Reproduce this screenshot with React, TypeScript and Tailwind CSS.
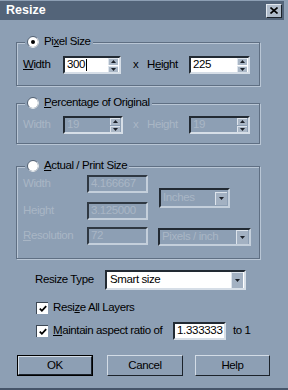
import React from 'react';

const BG = 'bg-[#8d9fb4]';

function Radio({ checked }: { checked?: boolean }) {
  return (
    <svg width="12" height="12" viewBox="0 0 12 12" className="shrink-0">
      <circle cx="6" cy="6" r="5.5" fill="#ffffff" stroke="#4f5e70" />
      <path d="M9.9 2.1 A5.5 5.5 0 0 1 2.1 9.9" fill="none" stroke="#e6ecf2" />
      {checked && <circle cx="6" cy="6" r="2" fill="#000" />}
    </svg>
  );
}

function Check() {
  return (
    <div className="w-[12px] h-[12px] shrink-0 bg-white border-t border-l border-[#3c4754] border-b-[#dfe6ee] border-r-[#dfe6ee] flex items-center justify-center">
      <svg width="10" height="10" viewBox="0 0 10 10">
        <path d="M1.8 4.6 L3.9 6.8 L8.2 2.2" fill="none" stroke="#000" strokeWidth="1.8" />
      </svg>
    </div>
  );
}

function Spin() {
  return (
    <div className="flex flex-col gap-px w-[10px] h-[14px]">
      {[0, 1].map((i) => (
        <div
          key={i}
          className="flex-1 bg-[#aab7c6] border-t border-l border-[#dde4ec] border-b-[#4e5c6d] border-r-[#4e5c6d] flex items-center justify-center"
        >
          <svg width="5" height="3" viewBox="0 0 5 3">
            <path d={i === 0 ? 'M0 3 L2.5 0 L5 3 Z' : 'M0 0 L2.5 3 L5 0 Z'} fill="#1b2028" />
          </svg>
        </div>
      ))}
    </div>
  );
}

function ArrowBtn({ h }: { h: string }) {
  return (
    <div
      className={`w-[12px] ${h} bg-[#a3b1c2] border-t border-l border-[#dde4ec] border-b-[#4e5c6d] border-r-[#4e5c6d] flex items-center justify-center`}
    >
      <svg width="5" height="3" viewBox="0 0 5 3">
        <path d="M0 0 L2.5 3 L5 0 Z" fill="#1b2028" />
      </svg>
    </div>
  );
}

function SpinBox({ value, w, disabled, caret }: { value: string; w: string; disabled?: boolean; caret?: boolean }) {
  return (
    <div
      className={`${w} h-[18px] border-2 border-t-[#222a33] border-l-[#222a33] border-b-[#d6dee7] border-r-[#d6dee7] flex items-center justify-between pl-[2px] pr-px ${
        disabled ? `${BG} text-[#a9b6c5]` : 'bg-white text-black'
      }`}
    >
      <span className="flex items-center leading-none">
        {value}
        {caret && <span className="w-px h-[12px] bg-black ml-px" />}
      </span>
      <Spin />
    </div>
  );
}

function Field({ value, w }: { value: string; w: string }) {
  return (
    <div className={`${w} h-[18px] border-2 border-t-[#2f3842] border-l-[#2f3842] border-b-[#c4cfdb] border-r-[#c4cfdb] ${BG} text-[#a9b6c5] flex items-center pl-[2px] leading-none`}>
      {value}
    </div>
  );
}

function Select({ value, w, h, btn }: { value: string; w: string; h: string; btn: string }) {
  return (
    <div
      className={`${w} ${h} border-2 border-t-[#222a33] border-l-[#222a33] border-b-[#c4cfdb] border-r-[#c4cfdb] ${BG} text-[#a9b6c5] flex items-center justify-between pl-[2px] pr-px leading-none`}
    >
      <span>{value}</span>
      <ArrowBtn h={btn} />
    </div>
  );
}

function Group({ title, checked, disabled, className, children }: { title: React.ReactNode; checked?: boolean; disabled?: boolean; className: string; children: React.ReactNode }) {
  return (
    <div className={`w-[244px] border border-[#5f6f83] shadow-[inset_1px_1px_0_#b9c6d5,1px_1px_0_#b9c6d5] ${className}`}>
      <div className={`-mt-[8px] ml-[8px] w-fit h-[14px] px-[2px] ${BG} flex items-center gap-[5px] text-black`}>
        <Radio checked={checked} />
        <span>{title}</span>
      </div>
      <div className={disabled ? 'text-[#a9b6c5]' : 'text-black'}>{children}</div>
    </div>
  );
}

function Button({ label, w, def, className }: { label: string; w: string; def?: boolean; className?: string }) {
  return (
    <div className={`${w} h-[21px] ${def ? 'border border-black' : ''} ${className ?? ''}`}>
      <div className="w-full h-full border border-t-[#d3dce6] border-l-[#d3dce6] border-b-[#1c232b] border-r-[#1c232b] flex items-center justify-center text-black">
        {label}
      </div>
    </div>
  );
}

export default function App() {
  return (
    <div
      className={`w-[288px] h-[390px] ${BG} flex flex-col pt-px pr-[4px] border-b-2 border-[#46556a] text-[11.5px] tracking-[-0.4px] font-['Liberation_Sans',Arial,sans-serif] overflow-hidden`}
    >
      {/* Title bar */}
      <div className="h-[19px] bg-[#536479] flex items-center justify-between pl-[6px] pr-[2px]">
        <span className="text-white font-bold text-[12.5px] tracking-[0px]">Resize</span>
        <div className="w-[16px] h-[14px] bg-[#b0bccb] border border-t-[#e3e9f0] border-l-[#e3e9f0] border-b-[#1c232b] border-r-[#1c232b] flex items-center justify-center">
          <svg width="8" height="7" viewBox="0 0 8 7">
            <path d="M0.5 0.5 L7.5 6.5 M7.5 0.5 L0.5 6.5" stroke="#000" strokeWidth="1.6" />
          </svg>
        </div>
      </div>

      <div className="flex flex-col pl-[16px]">
        {/* Pixel Size */}
        <Group title={<>Pi<u>x</u>el Size</>} checked className="mt-[22px] pb-[11px]">
          <div className="flex items-center mt-[7px] pl-[6px]">
            <span className="w-[40px]"><u>W</u>idth</span>
            <SpinBox value="300" w="w-[58px]" caret />
            <span className="ml-[12px] w-[14px]">x</span>
            <span className="w-[42px]">H<u>e</u>ight</span>
            <SpinBox value="225" w="w-[61px]" />
          </div>
        </Group>

        {/* Percentage */}
        <Group title={<><u>P</u>ercentage of Original</>} disabled className="mt-[17px] pb-[9px]">
          <div className="flex items-center mt-[6px] pl-[6px]">
            <span className="w-[40px]">Width</span>
            <SpinBox value="19" w="w-[60px]" disabled />
            <span className="ml-[10px] w-[14px]">x</span>
            <span className="w-[42px]">Height</span>
            <SpinBox value="19" w="w-[61px]" disabled />
          </div>
        </Group>

        {/* Actual / Print */}
        <Group title={<><u>A</u>ctual / Print Size</>} disabled className="mt-[22px] pb-[12px]">
          <div className="flex pl-[6px]">
            <div className="flex flex-col">
              <div className="flex items-center mt-[2px]">
                <span className="w-[64px]">Width</span>
                <Field value="4.166667" w="w-[61px]" />
              </div>
              <div className="flex items-center mt-[9px]">
                <span className="w-[64px]">Height</span>
                <Field value="3.125000" w="w-[61px]" />
              </div>
            </div>
            <div className="flex items-center ml-[11px] pt-[3px]">
              <Select value="Inches" w="w-[71px]" h="h-[20px]" btn="h-[13px]" />
            </div>
          </div>
          <div className="flex items-start mt-[7px] pl-[6px]">
            <span className="w-[64px] h-[18px] flex items-center"><u>R</u>esolution</span>
            <Field value="72" w="w-[61px]" />
            <div className="ml-[10px] mt-px">
              <Select value="Pixels / inch" w="w-[93px]" h="h-[18px]" btn="h-[14px]" />
            </div>
          </div>
        </Group>

        {/* Resize type */}
        <div className="flex items-center mt-[11px] ml-[19px] text-black">
          <span className="w-[70px]">Resize Type</span>
          <div className="w-[141px] h-[20px] bg-white border-2 border-t-[#222a33] border-l-[#222a33] border-b-[#d6dee7] border-r-[#d6dee7] flex items-center justify-between pl-[3px] pr-px">
            <span>Smart size</span>
            <ArrowBtn h="h-[16px]" />
          </div>
        </div>

        {/* Checkboxes */}
        <div className="flex items-center h-[14px] mt-[11px] ml-[20px] gap-[5px] text-black">
          <Check />
          <span>Resi<u>z</u>e All Layers</span>
        </div>
        <div className="flex items-center h-[18px] mt-[7px] ml-[20px] text-black">
          <Check />
          <span className="ml-[5px] w-[120px]"><u>M</u>aintain aspect ratio of</span>
          <div className="w-[53px] h-[18px] bg-white border-2 border-t-[#222a33] border-l-[#222a33] border-b-[#d6dee7] border-r-[#d6dee7] flex items-center pl-[2px] text-[11.5px] tracking-[-0.3px]">
            1.333333
          </div>
          <span className="ml-[7px]">to 1</span>
        </div>

        {/* Buttons */}
        <div className="flex mt-[15px]">
          <Button label="OK" w="w-[76px]" def className="ml-px" />
          <Button label="Cancel" w="w-[76px]" className="ml-[14px]" />
          <Button label="Help" w="w-[75px]" className="ml-[12px]" />
        </div>
      </div>
    </div>
  );
}
